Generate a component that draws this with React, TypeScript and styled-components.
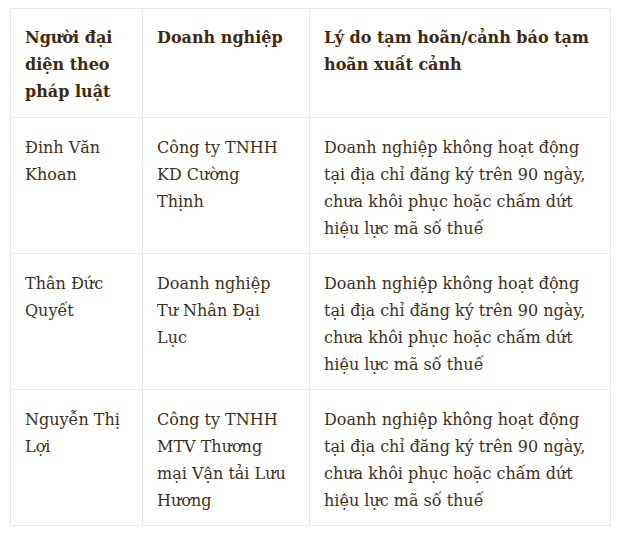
import React from 'react'
import styled, { createGlobalStyle } from 'styled-components'

const GlobalStyle = createGlobalStyle`
  html, body {
    margin: 0;
    padding: 0;
    background: #ffffff;
  }
  body {
    font-family: "DejaVu Serif", "Liberation Serif", serif;
  }
`

const Page = styled.div`
  padding: 8px 14px 12px 10px;
`

const Table = styled.table`
  width: 600px;
  border-collapse: collapse;
  table-layout: fixed;
  border: 1px solid #e9e9e9;
`

const Col = styled.col<{ $w: number }>`
  width: ${p => p.$w}px;
`

const HeadCell = styled.th`
  border: 1px solid #e9e9e9;
  padding: 15px 14px 12px 14px;
  text-align: left;
  vertical-align: top;
  font-size: 16px;
  line-height: 27px;
  font-weight: bold;
  color: #40290f;
`

const Cell = styled.td<{ $narrow?: boolean }>`
  border: 1px solid #e9e9e9;
  padding: 16px ${p => (p.$narrow ? 20 : 14)}px 11px 14px;
  vertical-align: top;
  font-size: 16px;
  line-height: 27px;
  color: #3e2f1a;
`

const reason =
  'Doanh nghiệp không hoạt động tại địa chỉ đăng ký trên 90 ngày, chưa khôi phục hoặc chấm dứt hiệu lực mã số thuế'

const rows = [
  { person: 'Đinh Văn Khoan', company: 'Công ty TNHH KD Cường Thịnh', reason },
  { person: 'Thân Đức Quyết', company: 'Doanh nghiệp Tư Nhân Đại Lục', reason },
  { person: 'Nguyễn Thị Lợi', company: 'Công ty TNHH MTV Thương mại Vận tải Lưu Hương', reason },
]

export default function App() {
  return (
    <>
      <GlobalStyle />
      <Page>
        <Table>
          <colgroup>
            <Col $w={132} />
            <Col $w={167} />
            <Col $w={301} />
          </colgroup>
          <thead>
            <tr>
              <HeadCell>Người đại diện theo pháp luật</HeadCell>
              <HeadCell>Doanh nghiệp</HeadCell>
              <HeadCell>Lý do tạm hoãn/cảnh báo tạm hoãn xuất cảnh</HeadCell>
            </tr>
          </thead>
          <tbody>
            {rows.map(r => (
              <tr key={r.person}>
                <Cell>{r.person}</Cell>
                <Cell $narrow>{r.company}</Cell>
                <Cell>{r.reason}</Cell>
              </tr>
            ))}
          </tbody>
        </Table>
      </Page>
    </>
  )
}
